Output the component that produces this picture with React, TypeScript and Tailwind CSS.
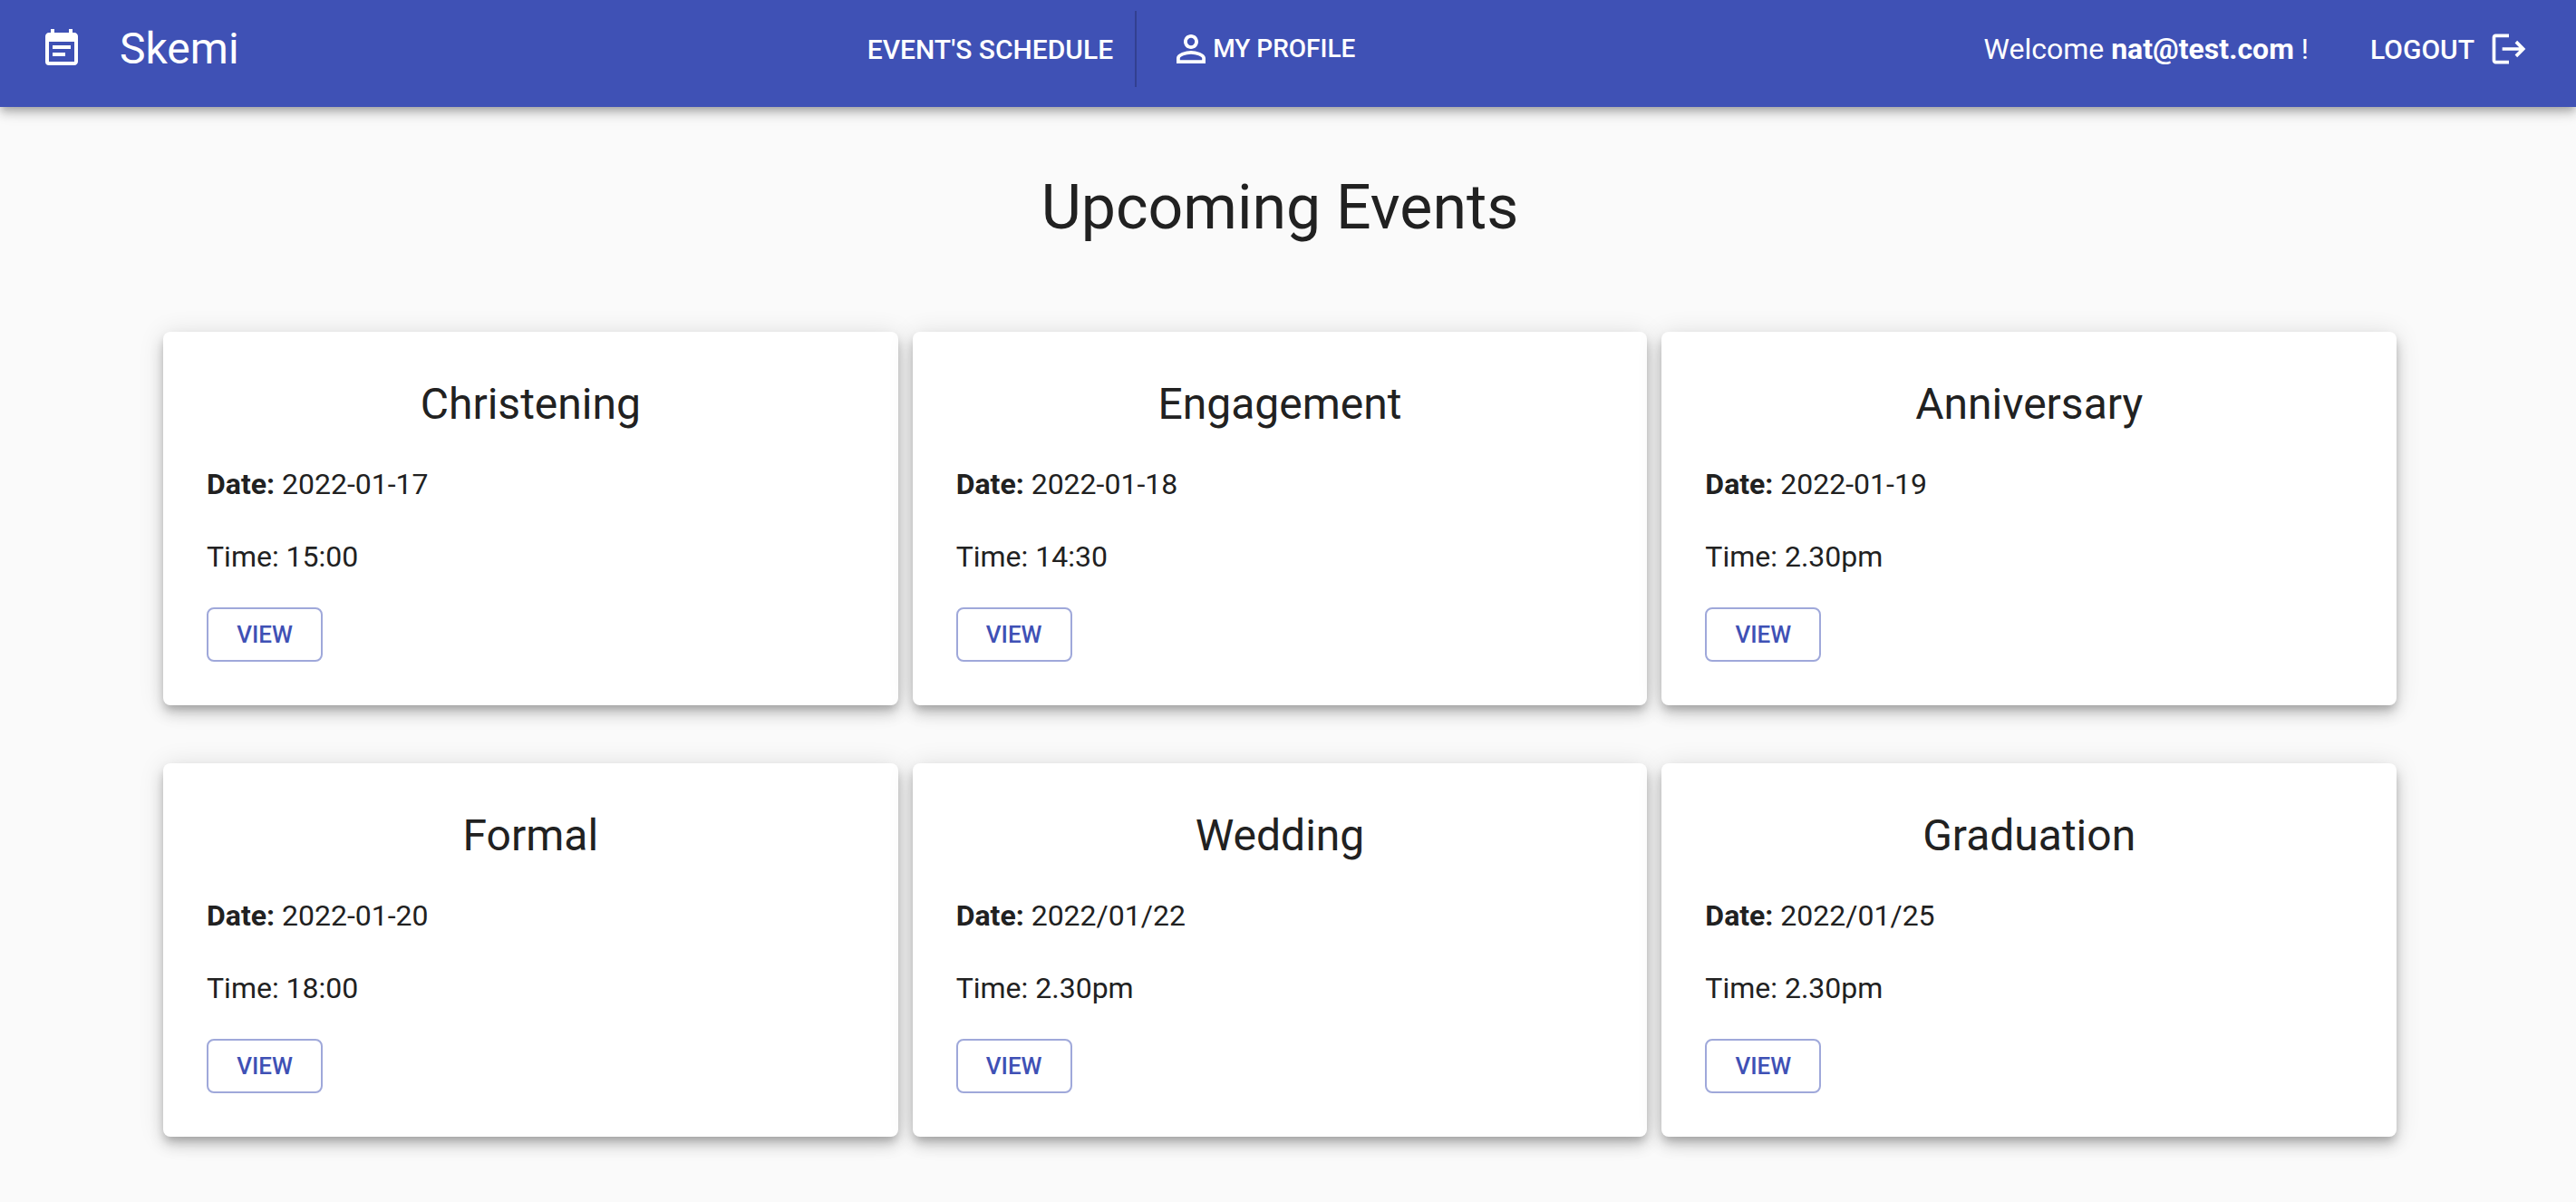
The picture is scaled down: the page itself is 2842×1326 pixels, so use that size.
import { MdEventNote, MdLogout, MdPersonOutline } from "react-icons/md";

type EventItem = { name: string; date: string; time: string };

const events: EventItem[] = [
  { name: "Christening", date: "2022-01-17", time: "15:00" },
  { name: "Engagement", date: "2022-01-18", time: "14:30" },
  { name: "Anniversary", date: "2022-01-19", time: "2.30pm" },
  { name: "Formal", date: "2022-01-20", time: "18:00" },
  { name: "Wedding", date: "2022/01/22", time: "2.30pm" },
  { name: "Graduation", date: "2022/01/25", time: "2.30pm" },
];

function Header() {
  return (
    <header className="flex items-center justify-between bg-[#3f51b5] pr-[52px] pb-[10px] pl-11 text-white shadow-[0_4px_8px_-2px_rgba(0,0,0,0.2),0_8px_10px_0_rgba(0,0,0,0.14),0_2px_20px_0_rgba(0,0,0,0.12)]">
      <a href="#home" className="flex items-center gap-10 text-5xl">
        <MdEventNote size={48} aria-hidden="true" />
        Skemi
      </a>
      <nav className="flex items-center font-medium uppercase">
        <a href="#schedule" className="pr-6 text-[30px]">
          Event's Schedule
        </a>
        <div className="my-3 h-21 w-0.5 bg-black/20" />
        <a href="#profile" className="flex items-center pl-9 text-[28px]">
          <MdPersonOutline size={48} aria-hidden="true" />
          My Profile
        </a>
      </nav>
      <div className="flex items-center gap-17">
        <p className="text-[32px]">
          Welcome <b>nat@test.com</b> !
        </p>
        <button type="button" className="flex items-center gap-4 text-[30px] font-medium uppercase">
          Logout
          <MdLogout size={44} aria-hidden="true" />
        </button>
      </div>
    </header>
  );
}

function EventCard({ name, date, time }: EventItem) {
  return (
    <article className="flex flex-col items-start gap-8 rounded-lg bg-white p-12 text-[32px] leading-12 shadow-[0_6px_10px_-2px_rgba(0,0,0,0.2),0_10px_16px_0_rgba(0,0,0,0.14),0_2px_28px_0_rgba(0,0,0,0.12)]">
      <h2 className="self-stretch text-center text-5xl leading-16">{name}</h2>
      <p>
        <b>Date:</b> {date}
      </p>
      <p>Time: {time}</p>
      <button
        type="button"
        className="h-15 min-w-32 rounded-lg border-2 border-[#3f51b5]/50 px-7 text-[26px] font-medium text-[#3f51b5] uppercase"
      >
        View
      </button>
    </article>
  );
}

export default function App() {
  return (
    <div className="min-h-screen bg-[#fafafa] font-['Roboto',sans-serif] text-[#212121] antialiased">
      <Header />
      <main className="pt-[69px] pr-[198px] pb-[72px] pl-[180px]">
        <h1 className="mb-[95px] text-center text-[68px] leading-21">Upcoming Events</h1>
        <div className="grid grid-cols-3 gap-x-4 gap-y-16">
          {events.map((event) => (
            <EventCard key={event.name} {...event} />
          ))}
        </div>
      </main>
    </div>
  );
}
